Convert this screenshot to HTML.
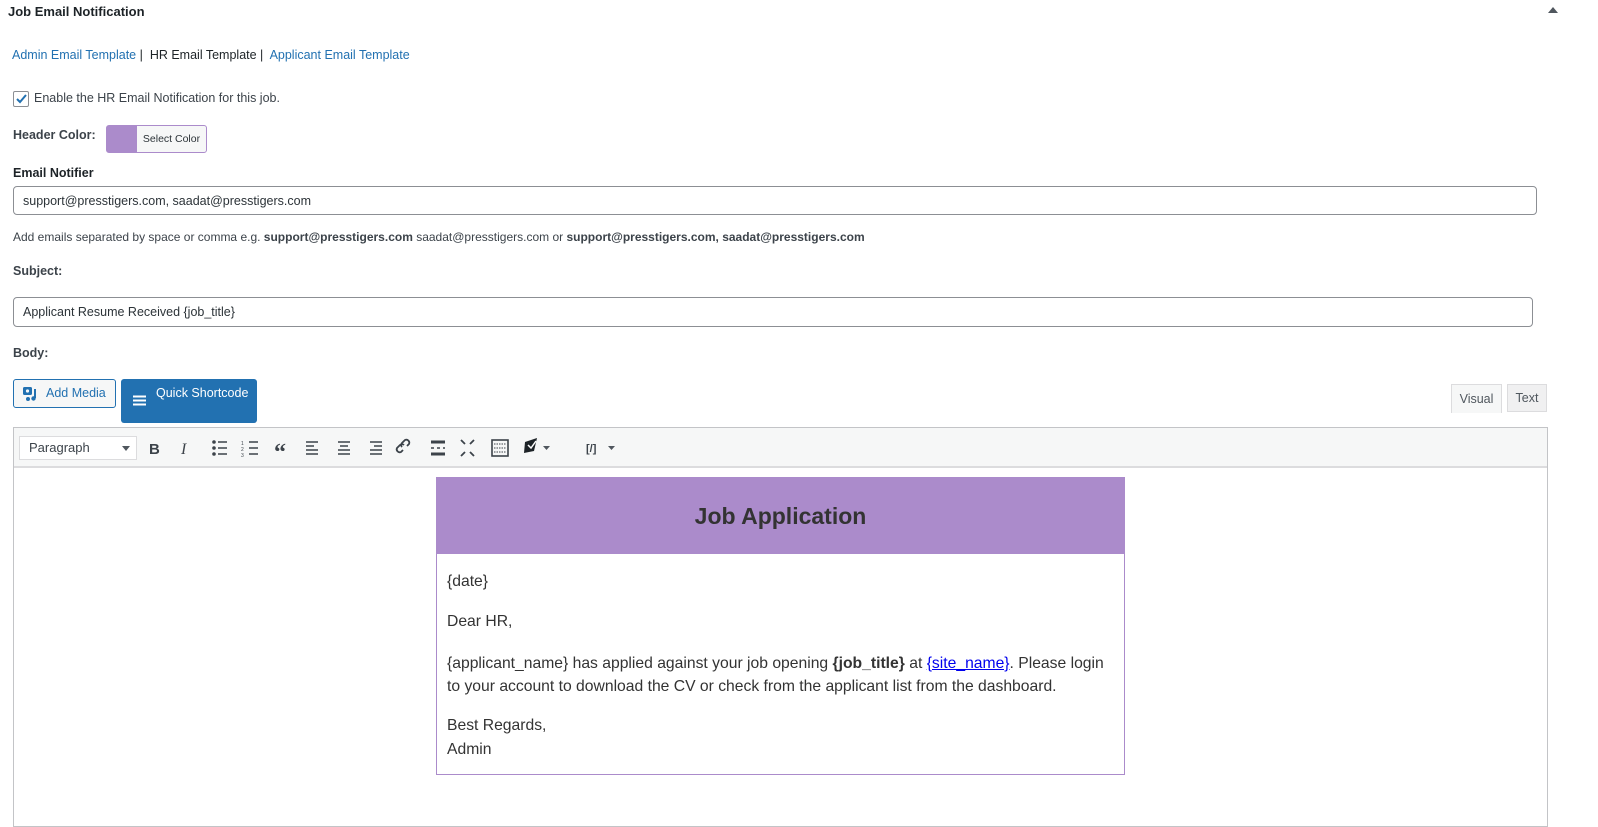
<!DOCTYPE html>
<html><head><meta charset="utf-8"><style>
*{box-sizing:border-box;margin:0;padding:0}
body{width:1598px;height:806px;background:#fff;font-family:"Liberation Sans",sans-serif;color:#3c434a;font-size:12.5px;position:relative;overflow:hidden}
.a{position:absolute;white-space:nowrap}
a{color:#2271b1;text-decoration:none}
.in{position:absolute;border:1px solid #8c8f94;border-radius:4px;background:#fff;padding-left:9px;font-size:12.5px;color:#2c3338;display:flex;align-items:center}
.tb svg{position:absolute}
.em{font-family:"Liberation Sans",Arial,sans-serif;font-size:15.7px;color:#333}
</style></head><body>
<div class="a" style="left:8px;top:4px;font-size:13px;font-weight:bold;color:#1d2327">Job Email Notification</div>
<div class="a" style="left:1548px;top:7px;width:0;height:0;border-left:5px solid transparent;border-right:5px solid transparent;border-bottom:6px solid #50575e"></div>
<div class="a" style="left:12px;top:48px"><a>Admin Email Template</a> <span style="color:#1d2327">|&nbsp; HR Email Template |</span>&nbsp; <a>Applicant Email Template</a></div>
<div class="a" style="left:13px;top:91px;width:16px;height:16px;border:1px solid #8c8f94;border-radius:2px"><svg width="14" height="14" viewBox="0 0 14 14"><path d="M3 7l3 3 6-7" stroke="#2271b1" stroke-width="2" fill="none"/></svg></div>
<div class="a" style="left:34px;top:91px">Enable the HR Email Notification for this job.</div>
<div class="a" style="left:13px;top:128px;font-weight:bold;color:#3c434a">Header Color:</div>
<div class="a" style="left:106px;top:125px;width:101px;height:28px;border:1px solid #ab8bcb;border-radius:3px;background:#ab8bcb;overflow:hidden"><div style="position:absolute;left:30px;top:0;right:0;bottom:0;background:#f6f7f7;font-size:10.5px;color:#2c3338;text-align:center;line-height:26px">Select Color</div></div>
<div class="a" style="left:13px;top:166px;font-weight:bold;color:#1d2327">Email Notifier</div>
<div class="in" style="left:13px;top:186px;width:1524px;height:29px">support@presstigers.com, saadat@presstigers.com</div>
<div class="a" style="left:13px;top:230px;font-size:12px">Add emails separated by space or comma e.g. <b>support@presstigers.com</b> saadat@presstigers.com or <b>support@presstigers.com, saadat@presstigers.com</b></div>
<div class="a" style="left:13px;top:264px;font-weight:bold">Subject:</div>
<div class="in" style="left:13px;top:297px;width:1520px;height:30px">Applicant Resume Received {job_title}</div>
<div class="a" style="left:13px;top:346px;font-weight:bold">Body:</div>
<div class="a" style="left:13px;top:379px;width:103px;height:29px;border:1px solid #2271b1;border-radius:3px;background:#f6f7f7;color:#2271b1;font-size:12.5px;line-height:27px;padding-left:32px">Add Media
<svg style="position:absolute;left:8px;top:6px" width="18" height="16" viewBox="0 0 18 16"><rect x="1" y="1" width="9" height="8" rx="1.5" fill="#2271b1"/><circle cx="5.5" cy="5" r="1.6" fill="#f6f7f7"/><path d="M13 3v9" stroke="#2271b1" stroke-width="2"/><circle cx="11.5" cy="12.5" r="2.2" fill="#2271b1"/><circle cx="6" cy="13" r="2" fill="#2271b1"/></svg></div>
<div class="a" style="left:121px;top:379px;width:136px;height:44px;background:#2271b1;border-radius:3px;color:#fff;font-size:12.5px;padding:7px 0 0 35px">Quick Shortcode
<svg style="position:absolute;left:12px;top:16px" width="13" height="11"><path d="M0 1.5h13M0 5.5h13M0 9.5h13" stroke="#fff" stroke-width="2"/></svg></div>
<div class="a" style="left:1451px;top:384px;width:51px;height:29px;background:#f6f7f7;border:1px solid #dcdcde;border-bottom:none;font-size:12.5px;text-align:center;line-height:28px;color:#50575e">Visual</div>
<div class="a" style="left:1507px;top:384px;width:40px;height:28px;background:#f0f0f1;border:1px solid #dcdcde;font-size:12.5px;text-align:center;line-height:27px;color:#50575e">Text</div>
<div class="a" style="left:13px;top:427px;width:1535px;height:400px;border:1px solid #c3c4c7;background:#fff"></div>
<div class="a tb" style="left:14px;top:428px;width:1533px;height:40px;background:#f6f7f7;border-bottom:2px solid #dcdcde">
<div style="position:absolute;left:5px;top:8px;width:118px;height:24px;border:1px solid #dcdcde;background:#fff;font-size:13px;color:#3c434a;padding:3px 0 0 9px">Paragraph<span style="position:absolute;right:6px;top:9px;border-left:4px solid transparent;border-right:4px solid transparent;border-top:5px solid #50575e"></span></div>
<svg width="520" height="40" style="left:125px;top:0" fill="none" stroke="#3c434a" stroke-width="1.6">
<text x="10" y="26" font-family="Liberation Sans" font-weight="bold" font-size="15" fill="#3c434a" stroke="none">B</text>
<text x="42" y="26" font-family="Liberation Serif" font-style="italic" font-size="16" fill="#3c434a" stroke="none">I</text>
<path d="M79 14h9M79 20h9M79 26h9"/><circle cx="75" cy="14" r="1" fill="#3c434a"/><circle cx="75" cy="20" r="1" fill="#3c434a"/><circle cx="75" cy="26" r="1" fill="#3c434a"/>
<path d="M110 14h9M110 20h9M110 26h9" /><text x="102" y="17" font-size="5" fill="#3c434a" stroke="none">1</text><text x="102" y="23" font-size="5" fill="#3c434a" stroke="none">2</text><text x="102" y="29" font-size="5" fill="#3c434a" stroke="none">3</text>
<text x="135" y="32" font-family="Liberation Serif" font-weight="bold" font-size="24" fill="#3c434a" stroke="none">“</text>
<path d="M167 14h12M167 18h8M167 22h12M167 26h12"/>
<path d="M199 14h12M201 18h8M199 22h12M199 26h12"/>
<path d="M231 14h12M235 18h8M231 22h12M231 26h12"/>
<path d="M264 22l-2 2a3 3 0 0 1-4-4l3-3a3 3 0 0 1 4 0M268 18l2-2a3 3 0 0 0-4-4l-3 3a3 3 0 0 0 0 4" stroke-width="1.8"/>
<path d="M292 14h14M292 26h14" stroke-width="3"/><path d="M292 20h3M298 20h3M304 20h2"/>
<path d="M322 12l4 4M335 12l-4 4M322 28l4-4M335 28l-4-4" stroke-width="1.8"/>
<rect x="353" y="12" width="16" height="16"/><path d="M355 16h12M355 20h12M355 24h12" stroke-width="1" stroke-dasharray="1.5 1"/>
<path d="M386 14l12-4-3 13-10 2z" fill="#1d2327" stroke="none"/><path d="M389 17l3 3 5-7" stroke="#fff" stroke-width="1.5"/>
<path d="M404 18l3.5 4 3.5-4z" fill="#50575e" stroke="none"/>
<text x="447" y="24" font-size="11" font-weight="bold" fill="#3c434a" stroke="none">[/]</text>
<path d="M469 18l3.5 4 3.5-4z" fill="#50575e" stroke="none"/>
</svg></div>
<div class="a" style="left:436px;top:477px;width:689px;height:298px;border:1px solid #ab8bcb;background:#fff">
<div style="height:77px;background:#ab8bcb;text-align:center;font-size:23px;font-weight:bold;color:#333;line-height:78px;margin:-1px -1px 0">Job Application</div>
<div class="em" style="position:absolute;left:10px;top:95px">{date}</div>
<div class="em" style="position:absolute;left:10px;top:135px">Dear HR,</div>
<div class="em" style="position:absolute;left:10px;top:174px;line-height:23px">{applicant_name} has applied against your job opening <b>{job_title}</b> at <span style="color:#00e;text-decoration:underline">{site_name}</span>. Please login<br>to your account to download the CV or check from the applicant list from the dashboard.</div>
<div class="em" style="position:absolute;left:10px;top:236px;line-height:24px">Best Regards,<br>Admin</div>
</div>
</body></html>
